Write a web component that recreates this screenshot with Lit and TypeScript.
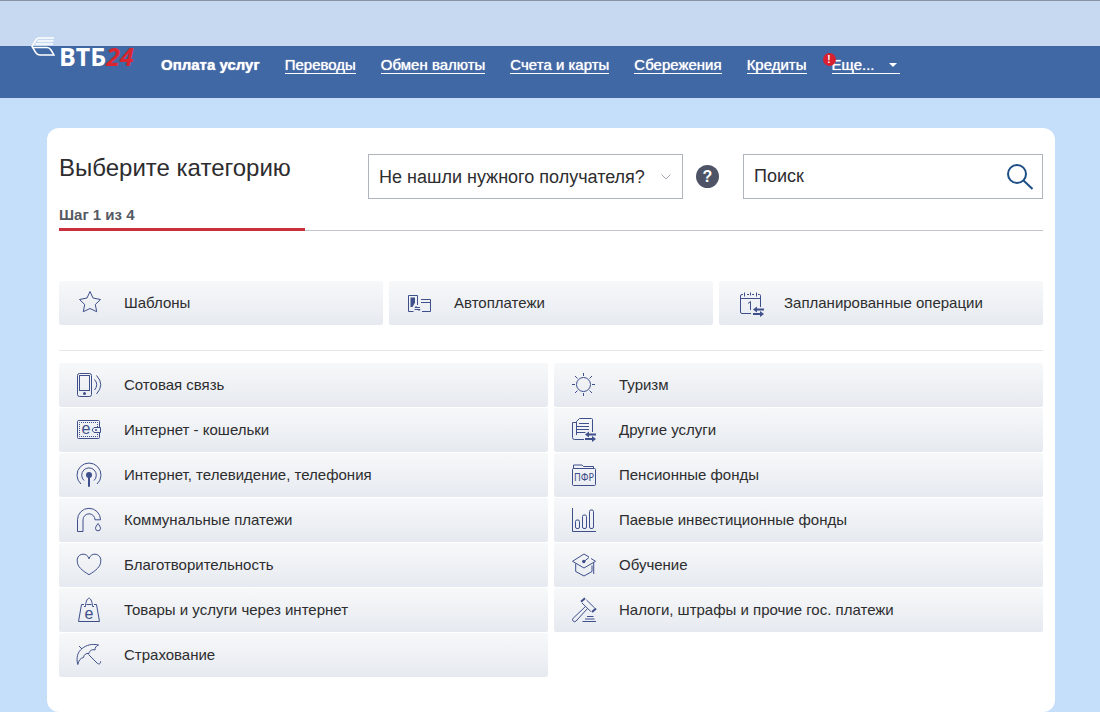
import { LitElement, html, css, svg, TemplateResult } from "lit";
import { customElement, property, state } from "lit/decorators.js";

const swapArrows = svg`
  <path class="solid" d="M16 19.5l4-3v2h7v2h-7v2zM27 24l-4 3v-2h-7v-2h7v-2z"/>`;

const icons: Record<string, TemplateResult> = {
  star: svg`<path d="M16 3.500l3 6.500 7.500 1.500-5.200 5 1.400 7.200L16 20.500l-6.700 3.200 1.400-7.200-5.200-5L13 10z"/>`,
  auto: svg`
    <path d="M13.500 17V7.500h-9v16h5"/>
    <path class="solid" d="M6.500 9.500h4.500v5l-2.500 4.500h-2z"/>
    <path d="M17 11.500h9.500v12H18M17 14.500h9.500M16 19.500h-5l1.500-1.500M10.500 21.500h5.500l-1.500 1.500"/>`,
  calendar: svg`
    <path d="M9 6.500H8a1.500 1.500 0 0 0-1.500 1.500v16a1.500 1.500 0 0 0 1.500 1.500h9M13 6.500h2M18 6.500h2M24 6.500h1.500a1 1 0 0 1 1 1V19M6.500 10.500h20M10.500 4.500v4M16.500 4.500v3M22.500 4.500v4M14 15.500l2.500-2V22"/>
    <path class="solid" d="M19 21.500l4-3v2h7v2h-7v2zM30 26l-4 3v-2h-7v-2h7v-2z"/>`,
  phone: svg`
    <rect x="3.500" y="3.500" width="14" height="23" rx="2"/>
    <rect x="5.500" y="5.500" width="10" height="15"/>
    <circle class="solid" cx="10.500" cy="23.500" r="1.500"/>
    <path d="M20.500 9.500q4.500 5 0 10.500M22.500 5.500q8.500 9 0 18.500"/>`,
  wallet: svg`
    <path d="M25.500 12V6.500a1 1 0 0 0-1-1h-20a1 1 0 0 0-1 1v16a1 1 0 0 0 1 1h20a1 1 0 0 0 1-1V17.500"/>
    <path stroke-dasharray="1 1" d="M23.500 12V7.500h-18v14h18V18"/>
    <path d="M26.500 12.500v5h-6.500l-2-2.500 2-2.500z"/>
    <circle class="solid" cx="22" cy="15" r="1"/>
    <text class="glyph" x="12" y="19" font-size="16">e</text>`,
  antenna: svg`
    <path d="M7 24a12 12 0 1 1 16 0M10 20.500a7.300 7.300 0 1 1 10 0"/>
    <circle class="solid" cx="15" cy="15" r="3"/>
    <path stroke-width="2" d="M15 16v10.700"/>`,
  tap: svg`
    <path d="M3.500 26.500V14.800a11.500 11.500 0 0 1 23 0H21a6 6 0 0 0-12 0v11.700z"/>
    <path d="M24 18.500c1.200 2 2.500 3.200 2.500 4.800a2.500 2.500 0 0 1-5 0c0-1.600 1.300-2.800 2.500-4.800z"/>`,
  heart: svg`<path d="M15 24.700C8 20.500 3.300 16.500 3.300 11.500A6 6 0 0 1 15 8.800a6 6 0 0 1 11.700 2.700c0 5-4.700 9-11.700 13.200z"/>`,
  bag: svg`
    <path d="M10 9.500H7.500l-3 17h21l-3-17H20M12.500 9.500h5"/>
    <path d="M10 11.500h1.500c0-3.500 1.500-8.300 3.500-8.300s3.500 4.800 3.500 8.300H20"/>
    <text class="glyph" x="15" y="24" font-size="16">e</text>`,
  umbrella: svg`
    <path d="M5 6l3 3M3.800 24.500C2 18 3.500 12 8 8.500S18 3.500 24.500 5c-2.500 1-3.500 2.500-3.500 5-3-1-5.500.5-6 3.500-3-.5-5 1-5.500 4-3 .5-5 3-5.700 7z"/>
    <path d="M14.500 14.500l8.500 8.500c2 2 4 .5 3.500-1.700"/>`,
  sun: svg`
    <circle cx="14.500" cy="14.500" r="7"/>
    <path d="M14.500 3v3M14.500 23v3M3 14.500h3M23 14.500h3M6 6l2.500 2.500M20.500 20.500l2.500 2.500M6 23l2.500-2.500M20.500 8.500L23 6"/>`,
  docs: svg`
    <path d="M7.500 7.500h-4v15a2 2 0 0 0 2 2H15M7.500 20V6.500l3-3h12a1 1 0 0 1 1 1V17M10 8.500h10M7.500 11.500H20M7.500 14.500H20M7.500 17.500h9"/>
    ${swapArrows}`,
  folder: svg`
    <rect x="3.500" y="8.500" width="23" height="17" rx="1"/>
    <path d="M4.500 8.500v-3.500h8.500l1.500 1.500h10v2"/>
    <text class="glyph narrow" x="15" y="21">ПФР</text>`,
  chart: svg`
    <path d="M3.500 3v23.500h23.500"/>
    <rect x="6.500" y="15" width="4" height="8.500" rx="1.500"/>
    <rect x="13.500" y="10" width="4" height="13.500" rx="1.500"/>
    <rect x="20.500" y="5" width="4" height="18.500" rx="1.500"/>`,
  cap: svg`
    <path d="M20 7L15 4 3.500 11.300 15 18l11.500-6.700L22 8.500M15 11.500l5-4"/>
    <path d="M6.700 13.500v8L15 26l8-4.500v-6M24.700 12.500V24"/>
    <circle class="solid" cx="14.800" cy="11.500" r="1.700"/>`,
  gavel: svg`
    <path stroke-width="2" d="M12 6.700l4-3.400M23 17l4-3.600"/>
    <path d="M13 8l8.800 8.500M17.500 5l8.200 8M16.500 11.500L4.200 23.200a2 2 0 0 0 2.800 2.900L18.500 13.500"/>
    <path d="M18 21.500h6.500M16 24h9.500M13.500 26.500h13.500"/>`,
};

interface Category {
  icon: string;
  title: string;
}

const quickLinks: Category[] = [
  { icon: "star", title: "Шаблоны" },
  { icon: "auto", title: "Автоплатежи" },
  { icon: "calendar", title: "Запланированные операции" },
];

const columns: Category[][] = [
  [
    { icon: "phone", title: "Сотовая связь" },
    { icon: "wallet", title: "Интернет - кошельки" },
    { icon: "antenna", title: "Интернет, телевидение, телефония" },
    { icon: "tap", title: "Коммунальные платежи" },
    { icon: "heart", title: "Благотворительность" },
    { icon: "bag", title: "Товары и услуги через интернет" },
    { icon: "umbrella", title: "Страхование" },
  ],
  [
    { icon: "sun", title: "Туризм" },
    { icon: "docs", title: "Другие услуги" },
    { icon: "folder", title: "Пенсионные фонды" },
    { icon: "chart", title: "Паевые инвестиционные фонды" },
    { icon: "cap", title: "Обучение" },
    { icon: "gavel", title: "Налоги, штрафы и прочие гос. платежи" },
  ],
];

@customElement("category-tile")
class CategoryTile extends LitElement {
  @property() icon = "";
  @property() label = "";

  static styles = css`
    :host {
      display: block;
    }
    .tile {
      display: flex;
      align-items: center;
      gap: 20px;
      height: 44px;
      padding: 0 15px;
      border-radius: 2px;
      background: linear-gradient(#f7f8f9, #e6eaf0);
      color: #2d2d2f;
      font-size: 15px;
      line-height: 20px;
      text-decoration: none;
    }
    .tile:hover {
      background: #e6eaf0;
    }
    .icon {
      flex: none;
      width: 30px;
      height: 30px;
      overflow: visible;
      fill: none;
      stroke: #3e4f8b;
    }
    .solid {
      fill: #3e4f8b;
      stroke: none;
    }
    .glyph {
      fill: #3e4f8b;
      stroke: none;
      text-anchor: middle;
    }
    .narrow {
      font-family: "Liberation Sans Narrow", "DejaVu Sans Condensed", sans-serif;
      font-size: 10px;
    }
  `;

  render() {
    return html`
      <a class="tile" href="#">
        <svg class="icon" viewBox="0 0 30 30" aria-hidden="true">${icons[this.icon]}</svg>
        <span>${this.label}</span>
      </a>
    `;
  }
}

@customElement("site-header")
class SiteHeader extends LitElement {
  static styles = css`
    :host {
      display: block;
    }
    .strip {
      height: 45px;
      border-top: 1px solid #8791a0;
      background: #c7d9f0;
    }
    .bar {
      display: flex;
      align-items: flex-start;
      height: 52px;
      padding: 0 31px;
      background: #4068a4;
    }
    .logo {
      display: flex;
      flex: none;
      gap: 4px;
      width: 130px;
      margin-top: -10px;
      color: #fff;
      text-decoration: none;
    }
    .mark {
      width: 24px;
      height: 22px;
      fill: none;
      stroke: #fff;
      stroke-width: 1.5;
    }
    .name {
      padding-top: 7px;
      font: bold 25px/26px "Open Sans", "Noto Sans", sans-serif;
    }
    .accent {
      color: #d9252f;
      font-style: italic;
    }
    .menu {
      display: flex;
      gap: 25px;
      margin: 0;
      padding: 10px 0 0;
      list-style: none;
      font-size: 15px;
      line-height: 17px;
      white-space: nowrap;
    }
    .link {
      display: block;
      border-bottom: 1px solid #fff;
      color: #fff;
      text-decoration: none;
      text-shadow: 0 0 1px #fff;
    }
    .current {
      border-color: transparent;
      font-weight: bold;
    }
    .more {
      position: relative;
    }
    .caret {
      display: inline-block;
      margin: 0 3px 3px 14px;
      border: 4px solid transparent;
      border-top-color: #fff;
      border-bottom: 0;
    }
    .alert {
      position: absolute;
      top: -3px;
      left: -9px;
      width: 13px;
      height: 13px;
      border-radius: 50%;
      background: #d9202f;
      color: #fff;
      font: bold 10px/13px "Liberation Sans", sans-serif;
      text-align: center;
    }
  `;

  render() {
    const links = ["Переводы", "Обмен валюты", "Счета и карты", "Сбережения", "Кредиты"];
    return html`
      <div class="strip"></div>
      <div class="bar">
        <a class="logo" href="#" aria-label="ВТБ24">
          <svg class="mark" viewBox="0 0 24 22" aria-hidden="true">
            <path d="M23 2H8Q6 2 4.500 4.500L1 10.500 5 17q1.500 2 4 2h14l-3-5q-1.500-2.500-4-2.500H2M22.500 5H6.500M22 8H4.500" />
          </svg>
          <span class="name">ВТБ<span class="accent">24</span></span>
        </a>
        <nav>
          <ul class="menu">
            <li><a class="link current" href="#" aria-current="page">Оплата услуг</a></li>
            ${links.map((name) => html`<li><a class="link" href="#">${name}</a></li>`)}
            <li class="more">
              <a class="link" href="#">Еще...<span class="caret"></span></a>
              <span class="alert">!</span>
            </li>
          </ul>
        </nav>
      </div>
    `;
  }
}

@customElement("app-root")
class AppRoot extends LitElement {
  @state() private step = 1;
  @state() private total = 4;

  static styles = css`
    :host {
      display: flex;
      flex-direction: column;
      box-sizing: border-box;
      min-height: 100vh;
      background: #c5dffb;
      color: #2d2d2f;
      font-family: "Liberation Sans", Arial, sans-serif;
    }
    .card {
      flex: 1;
      margin: 30px 45px 0 47px;
      padding: 26px 12px 35px;
      border-radius: 12px;
      background: #fff;
    }
    .top {
      display: flex;
      align-items: flex-start;
    }
    .title {
      flex: 1;
      margin: 0;
      font-size: 24px;
      font-weight: normal;
      line-height: 28px;
    }
    .field {
      box-sizing: border-box;
      height: 45px;
      padding: 0 10px;
      border: 1px solid #b0b4be;
      border-radius: 0;
      background: #fff;
      color: #2d2d2f;
      font: 18px "Liberation Sans", Arial, sans-serif;
    }
    .picker,
    .search {
      display: grid;
      align-items: center;
    }
    .picker > *,
    .search > * {
      grid-area: 1 / 1;
    }
    .picker {
      width: 315px;
    }
    .search {
      width: 300px;
    }
    .select {
      width: 100%;
      appearance: none;
    }
    .chevron {
      justify-self: end;
      width: 10px;
      height: 6px;
      margin-right: 12px;
      fill: none;
      stroke: #a3a7af;
      pointer-events: none;
    }
    .help {
      width: 23px;
      height: 23px;
      margin: 11px 24px 0 13px;
      padding: 0;
      border: 0;
      border-radius: 50%;
      background: #4e5465;
      color: #fff;
      font: bold 16px/23px "Liberation Sans", Arial, sans-serif;
    }
    .input {
      width: 100%;
    }
    .input::placeholder {
      color: #2d2d2f;
      opacity: 1;
    }
    .find {
      justify-self: end;
      display: flex;
      margin-right: 9px;
      padding: 0;
      border: 0;
      background: none;
    }
    .lens {
      width: 28px;
      height: 28px;
      fill: none;
      stroke: #1c4f86;
      stroke-width: 2;
    }
    .step {
      margin: 7px 0 0;
      color: #555962;
      font-size: 15px;
      font-weight: bold;
      line-height: 18px;
    }
    .track {
      height: 2px;
      margin-top: 4px;
      border-bottom: 1px solid #c2c4cb;
    }
    .progress {
      height: 3px;
      background: #c92f3c;
    }
    .quick {
      display: grid;
      grid-template-columns: repeat(3, 1fr);
      gap: 6px;
      margin-top: 50px;
      padding-bottom: 25px;
      border-bottom: 1px solid #e6e7ea;
    }
    .lists {
      display: grid;
      grid-template-columns: 1fr 1fr;
      align-items: start;
      gap: 6px;
      margin-top: 12px;
    }
    .list {
      display: grid;
      gap: 1px;
      margin: 0;
      padding: 0;
      list-style: none;
    }
  `;

  render() {
    return html`
      <site-header></site-header>
      <main class="card">
        <div class="top">
          <h1 class="title">Выберите категорию</h1>
          <div class="picker">
            <select class="field select" aria-label="Не нашли нужного получателя?">
              <option>Не нашли нужного получателя?</option>
            </select>
            <svg class="chevron" viewBox="0 0 10 6" aria-hidden="true"><path d="M.5.5L5 5 9.500.5" /></svg>
          </div>
          <button class="help" type="button">?</button>
          <div class="search">
            <input class="field input" type="text" placeholder="Поиск" aria-label="Поиск" />
            <button class="find" type="button" aria-label="Поиск">
              <svg class="lens" viewBox="0 0 28 28" aria-hidden="true">
                <circle cx="11" cy="11" r="9" />
                <path d="M17.500 17.500l9 8.500" />
              </svg>
            </button>
          </div>
        </div>
        <p class="step">Шаг ${this.step} из ${this.total}</p>
        <div class="track">
          <div class="progress" style="width: ${(this.step / this.total) * 100}%"></div>
        </div>
        <div class="quick">
          ${quickLinks.map((c) => html`<category-tile icon=${c.icon} label=${c.title}></category-tile>`)}
        </div>
        <div class="lists">
          ${columns.map(
            (items) => html`
              <ul class="list">
                ${items.map(
                  (c) => html`<li><category-tile icon=${c.icon} label=${c.title}></category-tile></li>`
                )}
              </ul>
            `
          )}
        </div>
      </main>
    `;
  }
}
